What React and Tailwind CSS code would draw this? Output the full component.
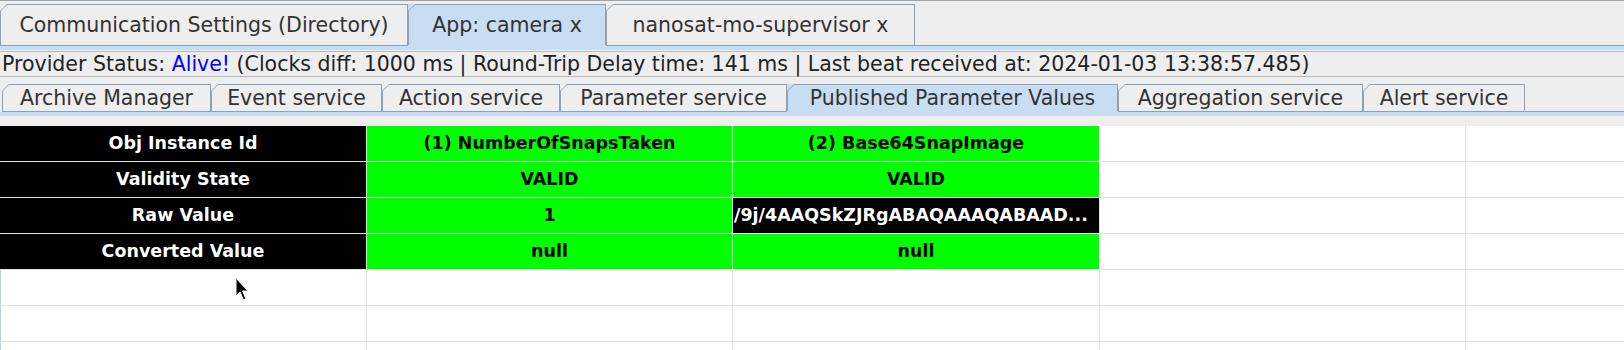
import React from 'react';

const topTabs = [
  { name: 'Communication Settings (Directory)', w: 'w-[408px]' },
  { name: 'App: camera x', w: 'w-[198px]', active: true },
  { name: 'nanosat-mo-supervisor x', w: 'w-[309px]' },
];

const subTabs = [
  { name: 'Archive Manager', w: 'w-[209px]' },
  { name: 'Event service', w: 'w-[171px]' },
  { name: 'Action service', w: 'w-[178px]' },
  { name: 'Parameter service', w: 'w-[227px]' },
  { name: 'Published Parameter Values', w: 'w-[331px]', active: true },
  { name: 'Aggregation service', w: 'w-[245px]' },
  { name: 'Alert service', w: 'w-[162px]' },
];

// label column + two published parameters
const rows = [
  ['Obj Instance Id', '(1) NumberOfSnapsTaken', '(2) Base64SnapImage'],
  ['Validity State', 'VALID', 'VALID'],
  ['Raw Value', '1', '/9j/4AAQSkZJRgABAQAAAQABAAD...'],
  ['Converted Value', 'null', 'null'],
];

const Tab = ({ tab, h }) => (
  <div
    className={`${tab.w} ${h} shrink-0 bg-[#8da2b8] [clip-path:polygon(7px_0,100%_0,100%_100%,0_100%,0_7px)] pt-px pl-px pr-px`}
  >
    <div
      className={`h-full flex items-center justify-center text-[#333333] ${
        tab.active ? 'bg-[#c8ddf2]' : 'bg-[#eeeeee]'
      } [clip-path:polygon(6px_0,100%_0,100%_100%,0_100%,0_6px)]`}
    >
      {tab.name}
    </div>
  </div>
);

const TabRow = ({ tabs, h }) => (
  <div className="flex items-end">
    {tabs.map((t) => (
      <div key={t.name} className={t.active ? 'pb-px bg-[#c8ddf2]' : 'border-b border-[#8da2b8]'}>
        <Tab tab={t} h={h} />
      </div>
    ))}
    <div className="flex-1 border-b border-[#8da2b8]" />
  </div>
);

const Cursor = () => (
  <svg className="absolute left-[235px] top-[277px]" width="15" height="25" viewBox="0 0 15 25">
    <path d="M1 1 L1 19 L5 15 L8.5 23 L11 22 L7.5 14 L13 14 Z" fill="#000" stroke="#fff" strokeWidth="1" />
  </svg>
);

const Cell = ({ children, dark, left }) => (
  <div
    className={`h-[35px] flex items-center overflow-hidden whitespace-nowrap ${
      dark ? 'bg-black text-white' : 'bg-[#00ff00] text-black'
    } ${left ? 'pl-px' : 'justify-center'}`}
  >
    {children}
  </div>
);

export default function App() {
  return (
    <div className="relative w-[1624px] h-[350px] overflow-hidden bg-[#eeeeee] [font-family:'DejaVu_Sans',sans-serif]">
      {/* top application tabs */}
      <div className="border-t border-[#a3a3a3] pt-[3px] text-[20.5px]">
        <TabRow tabs={topTabs} h="h-[41px]" />
        <div className="h-[4px] bg-[#c8ddf2]" />
      </div>

      {/* provider status */}
      <div className="mt-px h-[26px] border-y border-[#b9b9b9] flex items-center px-[2px] text-[20.5px] text-[#222222] whitespace-nowrap">
        Provider Status:&nbsp;<span className="text-[#0000ff]">Alive!</span>&nbsp;(Clocks diff: 1000 ms | Round-Trip Delay time: 141 ms | Last beat received at: 2024-01-03 13:38:57.485)
      </div>

      {/* service tabs */}
      <div className="mt-[7px] pl-[2px] text-[20.5px]">
        <TabRow tabs={subTabs} h="h-[27px]" />
      </div>
      <div className="h-[4px] bg-[#c8ddf2]" />
      <div className="h-[10px]" />

      {/* published parameter values table */}
      <div className="grid grid-cols-[366px_365px_366px_365px_1fr] gap-px bg-[#e2e2e2] text-[17.5px] font-bold">
        {rows.map((r, i) => (
          <React.Fragment key={i}>
            <Cell dark>{r[0]}</Cell>
            <Cell>{r[1]}</Cell>
            <Cell dark={i === 2} left={i === 2}>{r[2]}</Cell>
            <div className="h-[35px] bg-white" />
            <div className="h-[35px] bg-white" />
          </React.Fragment>
        ))}
        {[0, 1, 2].map((i) => (
          <React.Fragment key={'e' + i}>
            <div className="h-[35px] bg-white border-l border-[#b8cfe5]" />
            <div className="h-[35px] bg-white" />
            <div className="h-[35px] bg-white" />
            <div className="h-[35px] bg-white" />
            <div className="h-[35px] bg-white" />
          </React.Fragment>
        ))}
      </div>

      <Cursor />
    </div>
  );
}
